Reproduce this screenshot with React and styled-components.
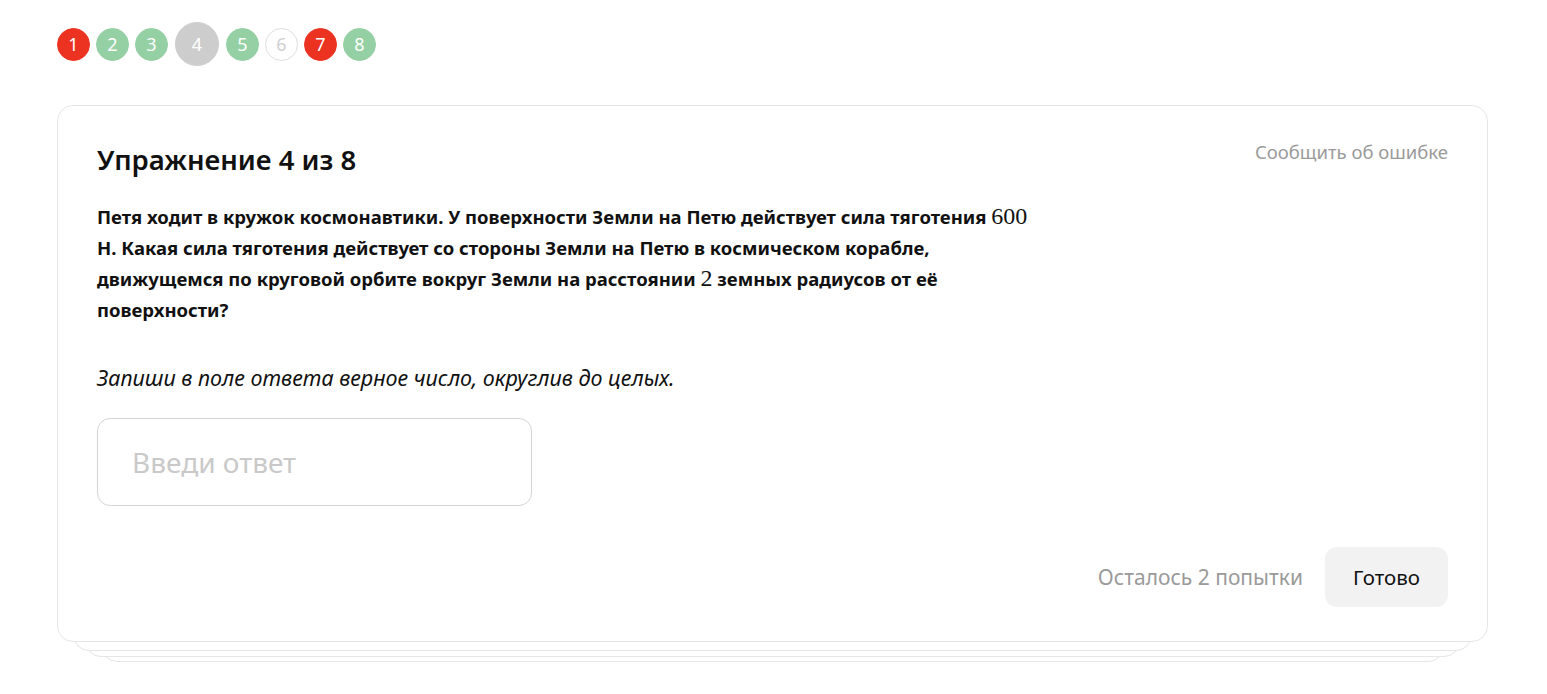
import React from "react";
import styled, { createGlobalStyle } from "styled-components";

const Global = createGlobalStyle`
  html, body { margin: 0; padding: 0; background: #fff; }
  body { font-family: "Noto Sans", "Open Sans", sans-serif; color: #111; }
`;

const Page = styled.div`
  padding: 22px 59px 40px 57px;
`;

const Steps = styled.div`
  display: flex;
  align-items: center;
  gap: 6px;
  height: 44px;
`;

const palette = {
  wrong: { bg: "#ec3322", fg: "#fff", border: "#ec3322" },
  right: { bg: "#94d0a3", fg: "#fff", border: "#94d0a3" },
  current: { bg: "#cdcdcd", fg: "#fff", border: "#cdcdcd" },
  empty: { bg: "#fff", fg: "#cfcfcf", border: "#dedede" },
};

const Step = styled.div`
  box-sizing: border-box;
  width: ${(p) => (p.$current ? 44 : 33)}px;
  height: ${(p) => (p.$current ? 44 : 33)}px;
  border-radius: 50%;
  background: ${(p) => palette[p.$kind].bg};
  color: ${(p) => palette[p.$kind].fg};
  border: 1px solid ${(p) => palette[p.$kind].border};
  display: flex;
  align-items: center;
  justify-content: center;
  font-size: 18px;
  font-family: "Noto Sans", sans-serif;
  flex-shrink: 0;
  ${(p) => p.$current && "margin: 0 1px;"}
`;

const Stack = styled.div`
  position: relative;
  margin-top: 39px;
`;

const Layer = styled.div`
  position: absolute;
  left: ${(p) => p.$inset}px;
  right: ${(p) => p.$inset}px;
  top: 0;
  bottom: -${(p) => p.$drop}px;
  border: 1px solid #e6e6e6;
  border-radius: 16px;
  background: #fff;
  z-index: ${(p) => p.$z};
`;

const Card = styled.div`
  position: relative;
  z-index: 5;
  box-sizing: border-box;
  height: 537px;
  border: 1px solid #e6e6e6;
  border-radius: 16px;
  background: #fff;
  padding: 37px 39px 34px 39px;
  display: flex;
  flex-direction: column;
`;

const Header = styled.div`
  display: flex;
  justify-content: space-between;
  align-items: flex-start;
`;

const Title = styled.h2`
  margin: 0;
  font-size: 27.5px;
  line-height: 34px;
  font-weight: 600;
  color: #111;
`;

const Report = styled.a`
  font-size: 18.5px;
  color: #9a9a9a;
  line-height: 24px;
  margin-top: -3px;
  cursor: pointer;
`;

const Question = styled.p`
  margin: 24px 0 0;
  max-width: 945px;
  font-size: 18.5px;
  line-height: 31px;
  font-weight: 700;
  color: #111;
`;

const Math = styled.span`
  font-family: "Liberation Serif", "DejaVu Serif", serif;
  font-weight: 400;
  font-size: 24px;
  line-height: 1;
`;

const Hint = styled.p`
  margin: 39px 0 0;
  font-size: 21.5px;
  line-height: 28px;
  font-style: italic;
  color: #111;
`;

const Input = styled.input`
  box-sizing: border-box;
  margin-top: 26px;
  width: 435px;
  height: 88px;
  border: 1px solid #d4d4d4;
  border-radius: 13px;
  padding: 0 34px;
  font-family: "Noto Sans", sans-serif;
  font-size: 28px;
  color: #111;
  outline: none;
  &::placeholder { color: #c9c9c9; }
`;

const Footer = styled.div`
  margin-top: auto;
  display: flex;
  justify-content: flex-end;
  align-items: center;
  gap: 22px;
`;

const Attempts = styled.span`
  font-size: 21px;
  color: #9a9a9a;
`;

const Button = styled.button`
  width: 123px;
  height: 60px;
  border: none;
  border-radius: 12px;
  background: #f2f2f2;
  font-family: "Noto Sans", sans-serif;
  font-size: 20.5px;
  color: #111;
  cursor: pointer;
`;

const steps = [
  { n: 1, kind: "wrong" },
  { n: 2, kind: "right" },
  { n: 3, kind: "right" },
  { n: 4, kind: "current", current: true },
  { n: 5, kind: "right" },
  { n: 6, kind: "empty" },
  { n: 7, kind: "wrong" },
  { n: 8, kind: "right" },
];

export default function App() {
  return (
    <Page>
      <Global />
      <Steps>
        {steps.map((s) => (
          <Step key={s.n} $kind={s.kind} $current={s.current}>
            {s.n}
          </Step>
        ))}
      </Steps>
      <Stack>
        <Layer $inset={16} $drop={9} $z={4} />
        <Layer $inset={28} $drop={15} $z={3} />
        <Layer $inset={44} $drop={20} $z={2} />
        <Card>
          <Header>
            <Title>Упражнение 4 из 8</Title>
            <Report>Сообщить об ошибке</Report>
          </Header>
          <Question>
            Петя ходит в кружок космонавтики. У поверхности Земли на Петю действует сила тяготения <Math>600</Math> Н. Какая сила тяготения действует со стороны Земли на Петю в космическом корабле, движущемся по круговой орбите вокруг Земли на расстоянии <Math>2</Math> земных радиусов от её поверхности?
          </Question>
          <Hint>Запиши в поле ответа верное число, округлив до целых.</Hint>
          <Input placeholder="Введи ответ" />
          <Footer>
            <Attempts>Осталось 2 попытки</Attempts>
            <Button>Готово</Button>
          </Footer>
        </Card>
      </Stack>
    </Page>
  );
}
